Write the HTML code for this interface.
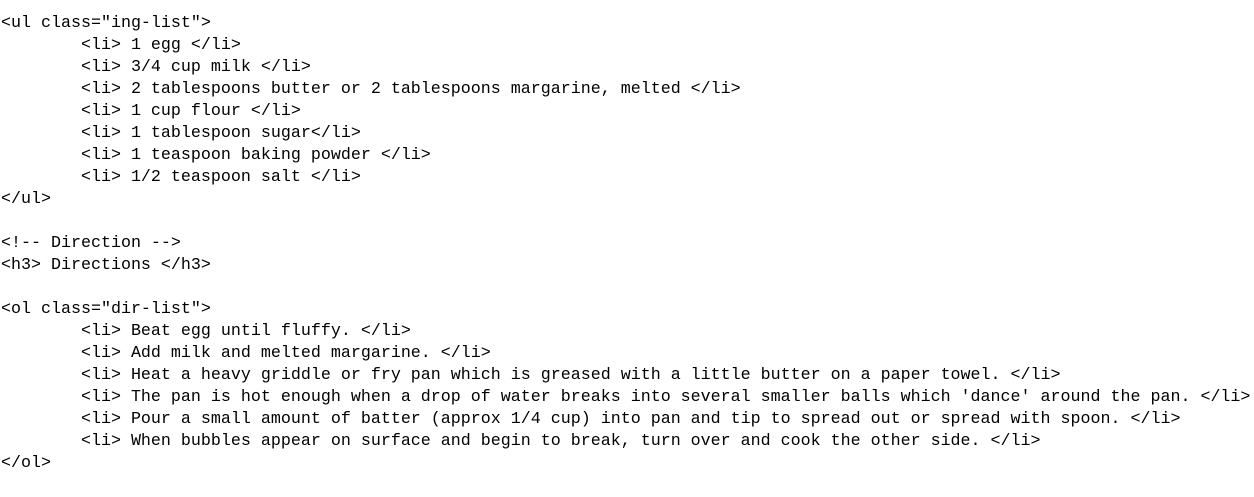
<!DOCTYPE html>
<html><head><meta charset="utf-8"><style>
html,body{margin:0;padding:0;background:#fff;width:1254px;height:497px;overflow:hidden}
pre{margin:0;padding:13px 0 0 1px;font-family:"Liberation Mono",monospace;font-size:16.67px;line-height:22px;color:#000;white-space:pre}
</style></head><body><pre>&lt;ul class="ing-list"&gt;
        &lt;li&gt; 1 egg &lt;/li&gt;
        &lt;li&gt; 3/4 cup milk &lt;/li&gt;
        &lt;li&gt; 2 tablespoons butter or 2 tablespoons margarine, melted &lt;/li&gt;
        &lt;li&gt; 1 cup flour &lt;/li&gt;
        &lt;li&gt; 1 tablespoon sugar&lt;/li&gt;
        &lt;li&gt; 1 teaspoon baking powder &lt;/li&gt;
        &lt;li&gt; 1/2 teaspoon salt &lt;/li&gt;
&lt;/ul&gt;

&lt;!-- Direction --&gt;
&lt;h3&gt; Directions &lt;/h3&gt;

&lt;ol class="dir-list"&gt;
        &lt;li&gt; Beat egg until fluffy. &lt;/li&gt;
        &lt;li&gt; Add milk and melted margarine. &lt;/li&gt;
        &lt;li&gt; Heat a heavy griddle or fry pan which is greased with a little butter on a paper towel. &lt;/li&gt;
        &lt;li&gt; The pan is hot enough when a drop of water breaks into several smaller balls which 'dance' around the pan. &lt;/li&gt;
        &lt;li&gt; Pour a small amount of batter (approx 1/4 cup) into pan and tip to spread out or spread with spoon. &lt;/li&gt;
        &lt;li&gt; When bubbles appear on surface and begin to break, turn over and cook the other side. &lt;/li&gt;
&lt;/ol&gt;</pre></body></html>
